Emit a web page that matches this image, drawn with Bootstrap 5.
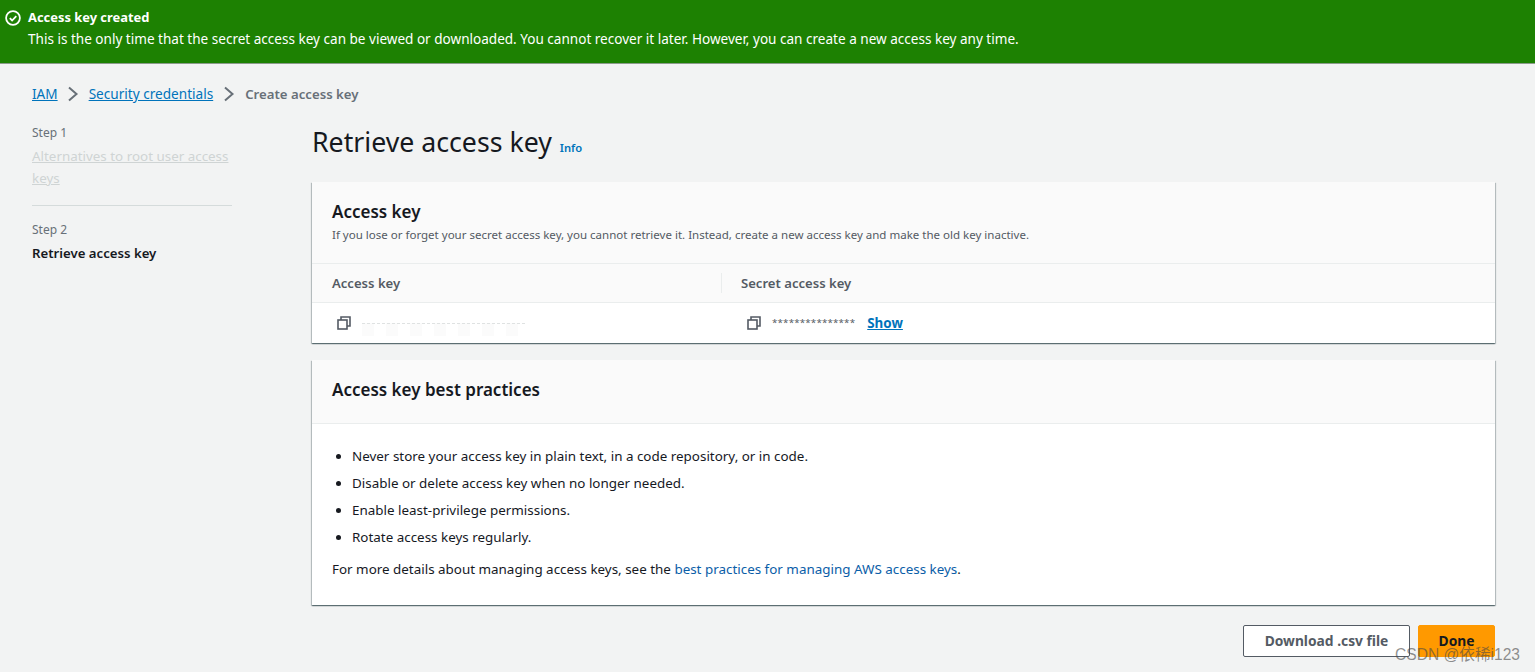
<!DOCTYPE html>
<html lang="en">
<head>
  <meta charset="UTF-8">
  <title>Retrieve access key</title>
  <link href="https://cdn.jsdelivr.net/npm/bootstrap@5.3.0/dist/css/bootstrap.min.css" rel="stylesheet">
  <style>
    html, body { height: 672px; overflow: hidden; }
    body { background: #f2f3f3; color: #16191f; font-family: "Noto Sans", "Liberation Sans", sans-serif; font-size: 14px; line-height: 20px; position: relative; }
    a { color: #0073bb; }
    .flash-bar { background: #1d8102; color: #fff; height: 64px; padding: 7px 5px 0; border-bottom: 1px solid #8c9b8c; gap: 7px; }
    .flash-bar svg { margin-top: 3px; }
    .flash-title { font-weight: 700; font-size: 12.9px; }
    .flash-text { font-size: 13.55px; margin-top: 2px; }
    .crumbs { padding: 10px 32px 0; height: 50px; color: #545b64; font-size: 13.6px; }
    .crumbs svg { margin: 0 10px; }
    .crumbs a:first-child { margin-right: -1px; }
    .crumb-now { font-weight: 600; color: #687078; font-size: 13.2px; }
    .page-body { padding-left: 32px; padding-right: 40px; }
    .side-nav { width: 200px; margin-right: 80px; flex: none; padding-top: 9px; font-size: 13.6px; line-height: 22px; }
    .step-no { color: #687078; font-size: 12px; line-height: 20px; margin-bottom: 2px; }
    .step-off { color: #cfd4d4; text-decoration: underline; display: block; font-size: 13.4px; }
    .side-rule { border-top: 1px solid #d5dbdb; margin: 16px 0 14px; opacity: 1; }
    .step-on { font-weight: 600; color: #16191f; font-size: 13.2px; }
    .main-col { flex: 1; min-width: 0; }
    .page-title { font-size: 26.7px; font-weight: 400; line-height: 36px; margin: 0; }
    .info-link { font-size: 11.2px; font-weight: 600; text-decoration: none; margin-left: 8px; }
    .title-row { height: 68px; padding-top: 10px; }
    .aws-card { background: #fff; border: 0; border-radius: 0; box-shadow: 0 1px 1px 0 rgba(0,28,36,.4), 1px 1px 1px 0 rgba(0,28,36,.2), -1px 1px 1px 0 rgba(0,28,36,.2); }
    .aws-head { background: #fafafa; border-bottom: 1px solid #eaeded; padding: 19px 20px 0; }
    .head-key { height: 82px; }
    .head-tips { height: 64px; }
    .card-name { font-size: 17px; font-weight: 600; line-height: 22px; margin: 0; }
    .card-note { font-size: 11.53px; color: #545b64; line-height: 16px; margin-top: 4px; }
    .key-cols { background: #fafafa; border-bottom: 1px solid #eaeded; height: 39px; color: #545b64; font-weight: 600; font-size: 13.1px; }
    .key-vals { height: 40px; }
    .key-cell { width: 409px; flex: none; padding-left: 20px; }
    .key-cell-b { padding-left: 19px; border-left: 1px solid #eaeded; height: 20px; line-height: 20px; }
    .val-cell { width: 410px; flex: none; padding-left: 25px; }
    .val-cell-b { padding-left: 25px; }
    .blur-key { width: 163px; height: 13px; margin: 13px 0 0 11px; border-top: 1px dashed #dfe2e2; background: repeating-linear-gradient(90deg, #fbfbfb 0 12px, transparent 12px 24px); }
    .stars { font-size: 9.8px; color: #545b64; letter-spacing: .15px; margin-left: 11px; margin-right: 12px; }
    .show-link { font-weight: 700; font-size: 13.4px; }
    .tips-body { padding: 22px 20px 26px; font-size: 13.42px; }
    .tips-list { padding-left: 20px; margin: 0; }
    .tips-list li { line-height: 20px; margin-bottom: 7px; }
    .tips-more { margin-top: 12px; margin-bottom: 0; }
    .tips-more a { text-decoration: none; color: #0b5ea8; }
    .card-gap { height: 17px; }
    .btn-row { padding-top: 20px; gap: 8px; }
    .btn-plain { background: #fff; border: 1px solid #545b64; color: #545b64; font-weight: 700; font-size: 13.8px; width: 167px; height: 32px; padding: 0; border-radius: 2px; line-height: 30px; }
    .btn-done { background: #ff9900; border: 1px solid #ff9900; color: #16191f; font-weight: 700; font-size: 13.8px; width: 77px; height: 32px; padding: 0; border-radius: 2px; line-height: 30px; }
    .watermark { position: absolute; left: 1395px; top: 645px; color: rgba(70,70,70,.6); font-family: "Liberation Sans", "Noto Sans CJK SC", sans-serif; font-size: 15.6px; line-height: 20px; white-space: nowrap; }
  </style>
</head>
<body>
  <div class="flash-bar d-flex">
    <svg width="16" height="16" viewBox="0 0 16 16" fill="none" stroke="#fff" stroke-width="1.8"><circle cx="8" cy="8" r="6.9"/><path d="M4.8 8.2l2.3 2.3 4.2-4.4"/></svg>
    <div>
      <div class="flash-title">Access key created</div>
      <div class="flash-text">This is the only time that the secret access key can be viewed or downloaded. You cannot recover it later. However, you can create a new access key any time.</div>
    </div>
  </div>

  <nav class="crumbs d-flex align-items-center">
    <a href="#">IAM</a>
    <svg width="12" height="16" viewBox="0 0 12 16" fill="none" stroke="#687078" stroke-width="2"><path d="M2 1.5l7.5 6.5-7.5 6.5"/></svg>
    <a href="#">Security credentials</a>
    <svg width="12" height="16" viewBox="0 0 12 16" fill="none" stroke="#687078" stroke-width="2"><path d="M2 1.5l7.5 6.5-7.5 6.5"/></svg>
    <span class="crumb-now">Create access key</span>
  </nav>

  <div class="page-body d-flex">
    <div class="side-nav">
      <div class="step-no">Step 1</div>
      <a class="step-off" href="#">Alternatives to root user access keys</a>
      <hr class="side-rule">
      <div class="step-no">Step 2</div>
      <div class="step-on">Retrieve access key</div>
    </div>

    <div class="main-col">
      <div class="title-row d-flex align-items-baseline">
        <h1 class="page-title">Retrieve access key</h1>
        <a class="info-link" href="#">Info</a>
      </div>

      <div class="aws-card">
        <div class="aws-head head-key">
          <h2 class="card-name">Access key</h2>
          <div class="card-note">If you lose or forget your secret access key, you cannot retrieve it. Instead, create a new access key and make the old key inactive.</div>
        </div>
        <div class="key-cols d-flex align-items-center">
          <div class="key-cell">Access key</div>
          <div class="key-cell-b">Secret access key</div>
        </div>
        <div class="key-vals d-flex align-items-center">
          <div class="val-cell d-flex align-items-center">
            <svg width="14" height="14" viewBox="0 0 14 14" fill="none" stroke="#545b64" stroke-width="1.6"><rect x="1" y="4" width="9" height="9"/><path d="M4 4V1h9v9h-3"/></svg>
            <div class="blur-key"></div>
          </div>
          <div class="val-cell-b d-flex align-items-center">
            <svg width="14" height="14" viewBox="0 0 14 14" fill="none" stroke="#545b64" stroke-width="1.6"><rect x="1" y="4" width="9" height="9"/><path d="M4 4V1h9v9h-3"/></svg>
            <span class="stars">***************</span>
            <a class="show-link" href="#">Show</a>
          </div>
        </div>
      </div>

      <div class="card-gap"></div>

      <div class="aws-card">
        <div class="aws-head head-tips">
          <h2 class="card-name">Access key best practices</h2>
        </div>
        <div class="tips-body">
          <ul class="tips-list">
            <li>Never store your access key in plain text, in a code repository, or in code.</li>
            <li>Disable or delete access key when no longer needed.</li>
            <li>Enable least-privilege permissions.</li>
            <li>Rotate access keys regularly.</li>
          </ul>
          <p class="tips-more">For more details about managing access keys, see the <a href="#">best practices for managing AWS access keys</a>.</p>
        </div>
      </div>

      <div class="btn-row d-flex justify-content-end">
        <button class="btn btn-plain" type="button">Download .csv file</button>
        <button class="btn btn-done" type="button">Done</button>
      </div>
    </div>
  </div>

  <div class="watermark">CSDN @依稀i123</div>
  <script src="https://cdn.jsdelivr.net/npm/bootstrap@5.3.0/dist/js/bootstrap.bundle.min.js"></script>
</body>
</html>
